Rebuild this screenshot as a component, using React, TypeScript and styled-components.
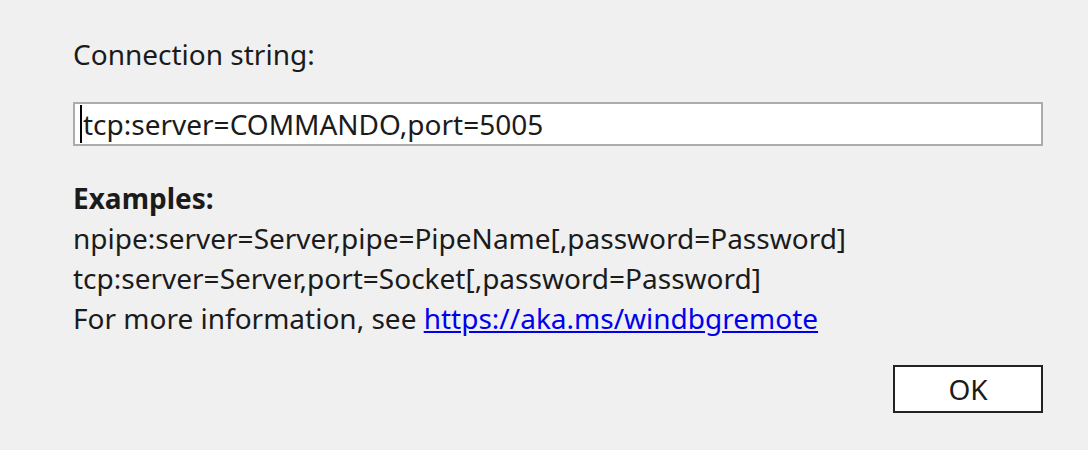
import React from 'react';
import styled, { createGlobalStyle } from 'styled-components';

const GlobalStyle = createGlobalStyle`
  html, body {
    margin: 0;
    padding: 0;
    background: #f0f0f0;
  }
  body {
    font-family: "Noto Sans", "Open Sans", sans-serif;
    color: #1b1b1b;
  }
`;

const Dialog = styled.div`
  width: 1088px;
  height: 450px;
  box-sizing: border-box;
  padding: 34px 45px 0 73px;
  display: flex;
  flex-direction: column;
  background: #f0f0f0;
`;

const Label = styled.div`
  font-size: 28px;
  line-height: 40px;
`;

const InputBox = styled.div`
  margin-top: 28px;
  width: 970px;
  height: 44px;
  box-sizing: border-box;
  border: 2px solid #acacac;
  background: #fff;
  display: flex;
  align-items: center;
  padding-left: 5px;
  font-size: 28px;
`;

const Caret = styled.span`
  width: 2px;
  height: 38px;
  background: #000;
  margin-right: 1px;
`;

const Examples = styled.div`
  margin-top: 32px;
  font-size: 28px;
  line-height: 40px;
`;

const Bold = styled.div`
  font-weight: 700;
`;

const Link = styled.a`
  color: #0000ee;
  text-decoration: underline;
`;

const Footer = styled.div`
  display: flex;
  justify-content: flex-end;
  margin-top: 27px;
`;

const Button = styled.button`
  width: 150px;
  height: 48px;
  box-sizing: border-box;
  border: 2px solid #222;
  background: #fff;
  font-family: inherit;
  font-size: 28px;
  color: #1b1b1b;
  padding: 0;
`;

export default function App() {
  return (
    <>
      <GlobalStyle />
      <Dialog>
        <Label>Connection string:</Label>
        <InputBox>
          <Caret />
          tcp:server=COMMANDO,port=5005
        </InputBox>
        <Examples>
          <Bold>Examples:</Bold>
          <div>npipe:server=Server,pipe=PipeName[,password=Password]</div>
          <div>tcp:server=Server,port=Socket[,password=Password]</div>
          <div>
            For more information, see <Link href="#">https://aka.ms/windbgremote</Link>
          </div>
        </Examples>
        <Footer>
          <Button>OK</Button>
        </Footer>
      </Dialog>
    </>
  );
}
